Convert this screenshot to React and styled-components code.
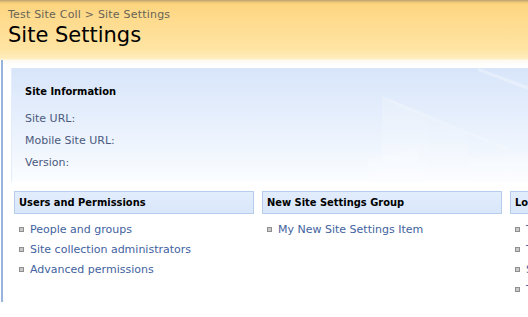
import styled, { createGlobalStyle } from 'styled-components';

const GlobalStyle = createGlobalStyle`
  html, body {
    margin: 0;
    padding: 0;
    background: #fff;
    overflow: hidden;
  }
  body {
    font-family: 'DejaVu Sans', Verdana, sans-serif;
    font-size: 11px;
  }
`;

const Page = styled.div`
  width: 528px;
  height: 317px;
  overflow: hidden;
`;

const TitleArea = styled.header`
  height: 60px;
  padding: 7px 0 0 8px;
  box-sizing: border-box;
  background: linear-gradient(
    to bottom,
    #b99d6e 0px,
    #e9c576 2px,
    #fdd47e 4px,
    #fed989 14px,
    #fee4a2 48px,
    #ffecbc 58px,
    #fff6df 60px
  );
`;

const Breadcrumb = styled.div`
  font-size: 11px;
  line-height: 15px;
  color: #686456;
  letter-spacing: 0.2px;
`;

const PageTitle = styled.h1`
  margin: 0;
  font-size: 21px;
  font-weight: normal;
  line-height: 26px;
  color: #000;
`;

const Body = styled.div`
  display: flex;
  height: 257px;
  background: linear-gradient(to bottom, #fffaf0 0px, #fff 6px);
`;

const LeftRule = styled.div`
  width: 2px;
  margin-left: 1px;
  height: 242px;
  background: #98b4dd;
  flex-shrink: 0;
`;

const Content = styled.main`
  flex: 1;
  min-width: 0;
  padding: 8px 0 0 8px;
  display: flex;
  flex-direction: column;
  gap: 9px;
`;

const InfoPanel = styled.section`
  position: relative;
  height: 114px;
  padding: 17px 0 0 13px;
  box-sizing: border-box;
  border-left: 1px solid #e6eefb;
  background: linear-gradient(to bottom, #d8e5fa 0%, #e6effc 45%, #fbfdff 100%);
  overflow: hidden;
`;

const Watermark = styled.svg`
  position: absolute;
  right: 0;
  top: 0;
  width: 170px;
  height: 114px;
`;

const InfoTitle = styled.h2`
  margin: 0 0 9px;
  font-family: 'DejaVu Sans Condensed', 'DejaVu Sans', Tahoma, sans-serif;
  font-size: 11px;
  font-weight: bold;
  line-height: 14px;
  color: #000;
`;

const InfoRow = styled.div`
  line-height: 22px;
  color: #4b5a7e;
`;

const Groups = styled.div`
  display: flex;
  gap: 8px;
  padding-left: 3px;
`;

const Group = styled.section`
  width: 240px;
  flex-shrink: 0;
`;

const GroupHeader = styled.h3`
  margin: 0;
  height: 21px;
  padding-left: 4px;
  border: 1px solid #b6cdee;
  background: linear-gradient(to bottom, #e2edfc, #d9e7fb);
  font-family: 'DejaVu Sans Condensed', 'DejaVu Sans', Tahoma, sans-serif;
  font-size: 11px;
  font-weight: bold;
  line-height: 21px;
  color: #000;
  white-space: nowrap;
  overflow: hidden;
`;

const LinkList = styled.ul`
  list-style: none;
  margin: 0;
  padding: 5px 0 0 5px;
`;

const LinkItem = styled.li`
  display: flex;
  align-items: center;
  gap: 6px;
  height: 20px;
  white-space: nowrap;
`;

const Bullet = styled.span`
  width: 3px;
  height: 3px;
  border: 1px solid #8f8f8f;
  background: #c8c8c8;
  flex-shrink: 0;
`;

const Link = styled.a`
  color: #4262a0;
  text-decoration: none;
  font-size: 11px;
`;

const groups = [
  {
    title: 'Users and Permissions',
    links: ['People and groups', 'Site collection administrators', 'Advanced permissions'],
  },
  {
    title: 'New Site Settings Group',
    links: ['My New Site Settings Item'],
  },
  {
    title: 'Look and Feel',
    links: ['Title, description, and icon', 'Tree view', 'Site theme', 'Top link bar'],
  },
];

const App = () => (
  <>
    <GlobalStyle />
    <Page>
      <TitleArea>
        <Breadcrumb>Test Site Coll &gt; Site Settings</Breadcrumb>
        <PageTitle>Site Settings</PageTitle>
      </TitleArea>
      <Body>
        <LeftRule />
        <Content>
          <InfoPanel>
            <Watermark viewBox="0 0 170 114" preserveAspectRatio="none">
              <polygon points="24,28 70,48 70,114 24,114" fill="#fff" opacity="0.2" />
              <polygon points="70,48 110,66 110,114 70,114" fill="#fff" opacity="0.15" />
              <polygon points="10,90 60,80 60,114 10,114" fill="#fff" opacity="0.2" />
              <polygon points="120,0 170,18 170,22 120,3" fill="#fff" opacity="0.3" />
              <polygon points="30,30 150,80 150,83 30,33" fill="#fff" opacity="0.2" />
              <polygon points="110,90 170,84 170,114 110,114" fill="#fff" opacity="0.2" />
            </Watermark>
            <InfoTitle>Site Information</InfoTitle>
            <InfoRow>Site URL:</InfoRow>
            <InfoRow>Mobile Site URL:</InfoRow>
            <InfoRow>Version:</InfoRow>
          </InfoPanel>
          <Groups>
            {groups.map((group) => (
              <Group key={group.title}>
                <GroupHeader>{group.title}</GroupHeader>
                <LinkList>
                  {group.links.map((link) => (
                    <LinkItem key={link}>
                      <Bullet />
                      <Link href="#">{link}</Link>
                    </LinkItem>
                  ))}
                </LinkList>
              </Group>
            ))}
          </Groups>
        </Content>
      </Body>
    </Page>
  </>
);

export default App;
